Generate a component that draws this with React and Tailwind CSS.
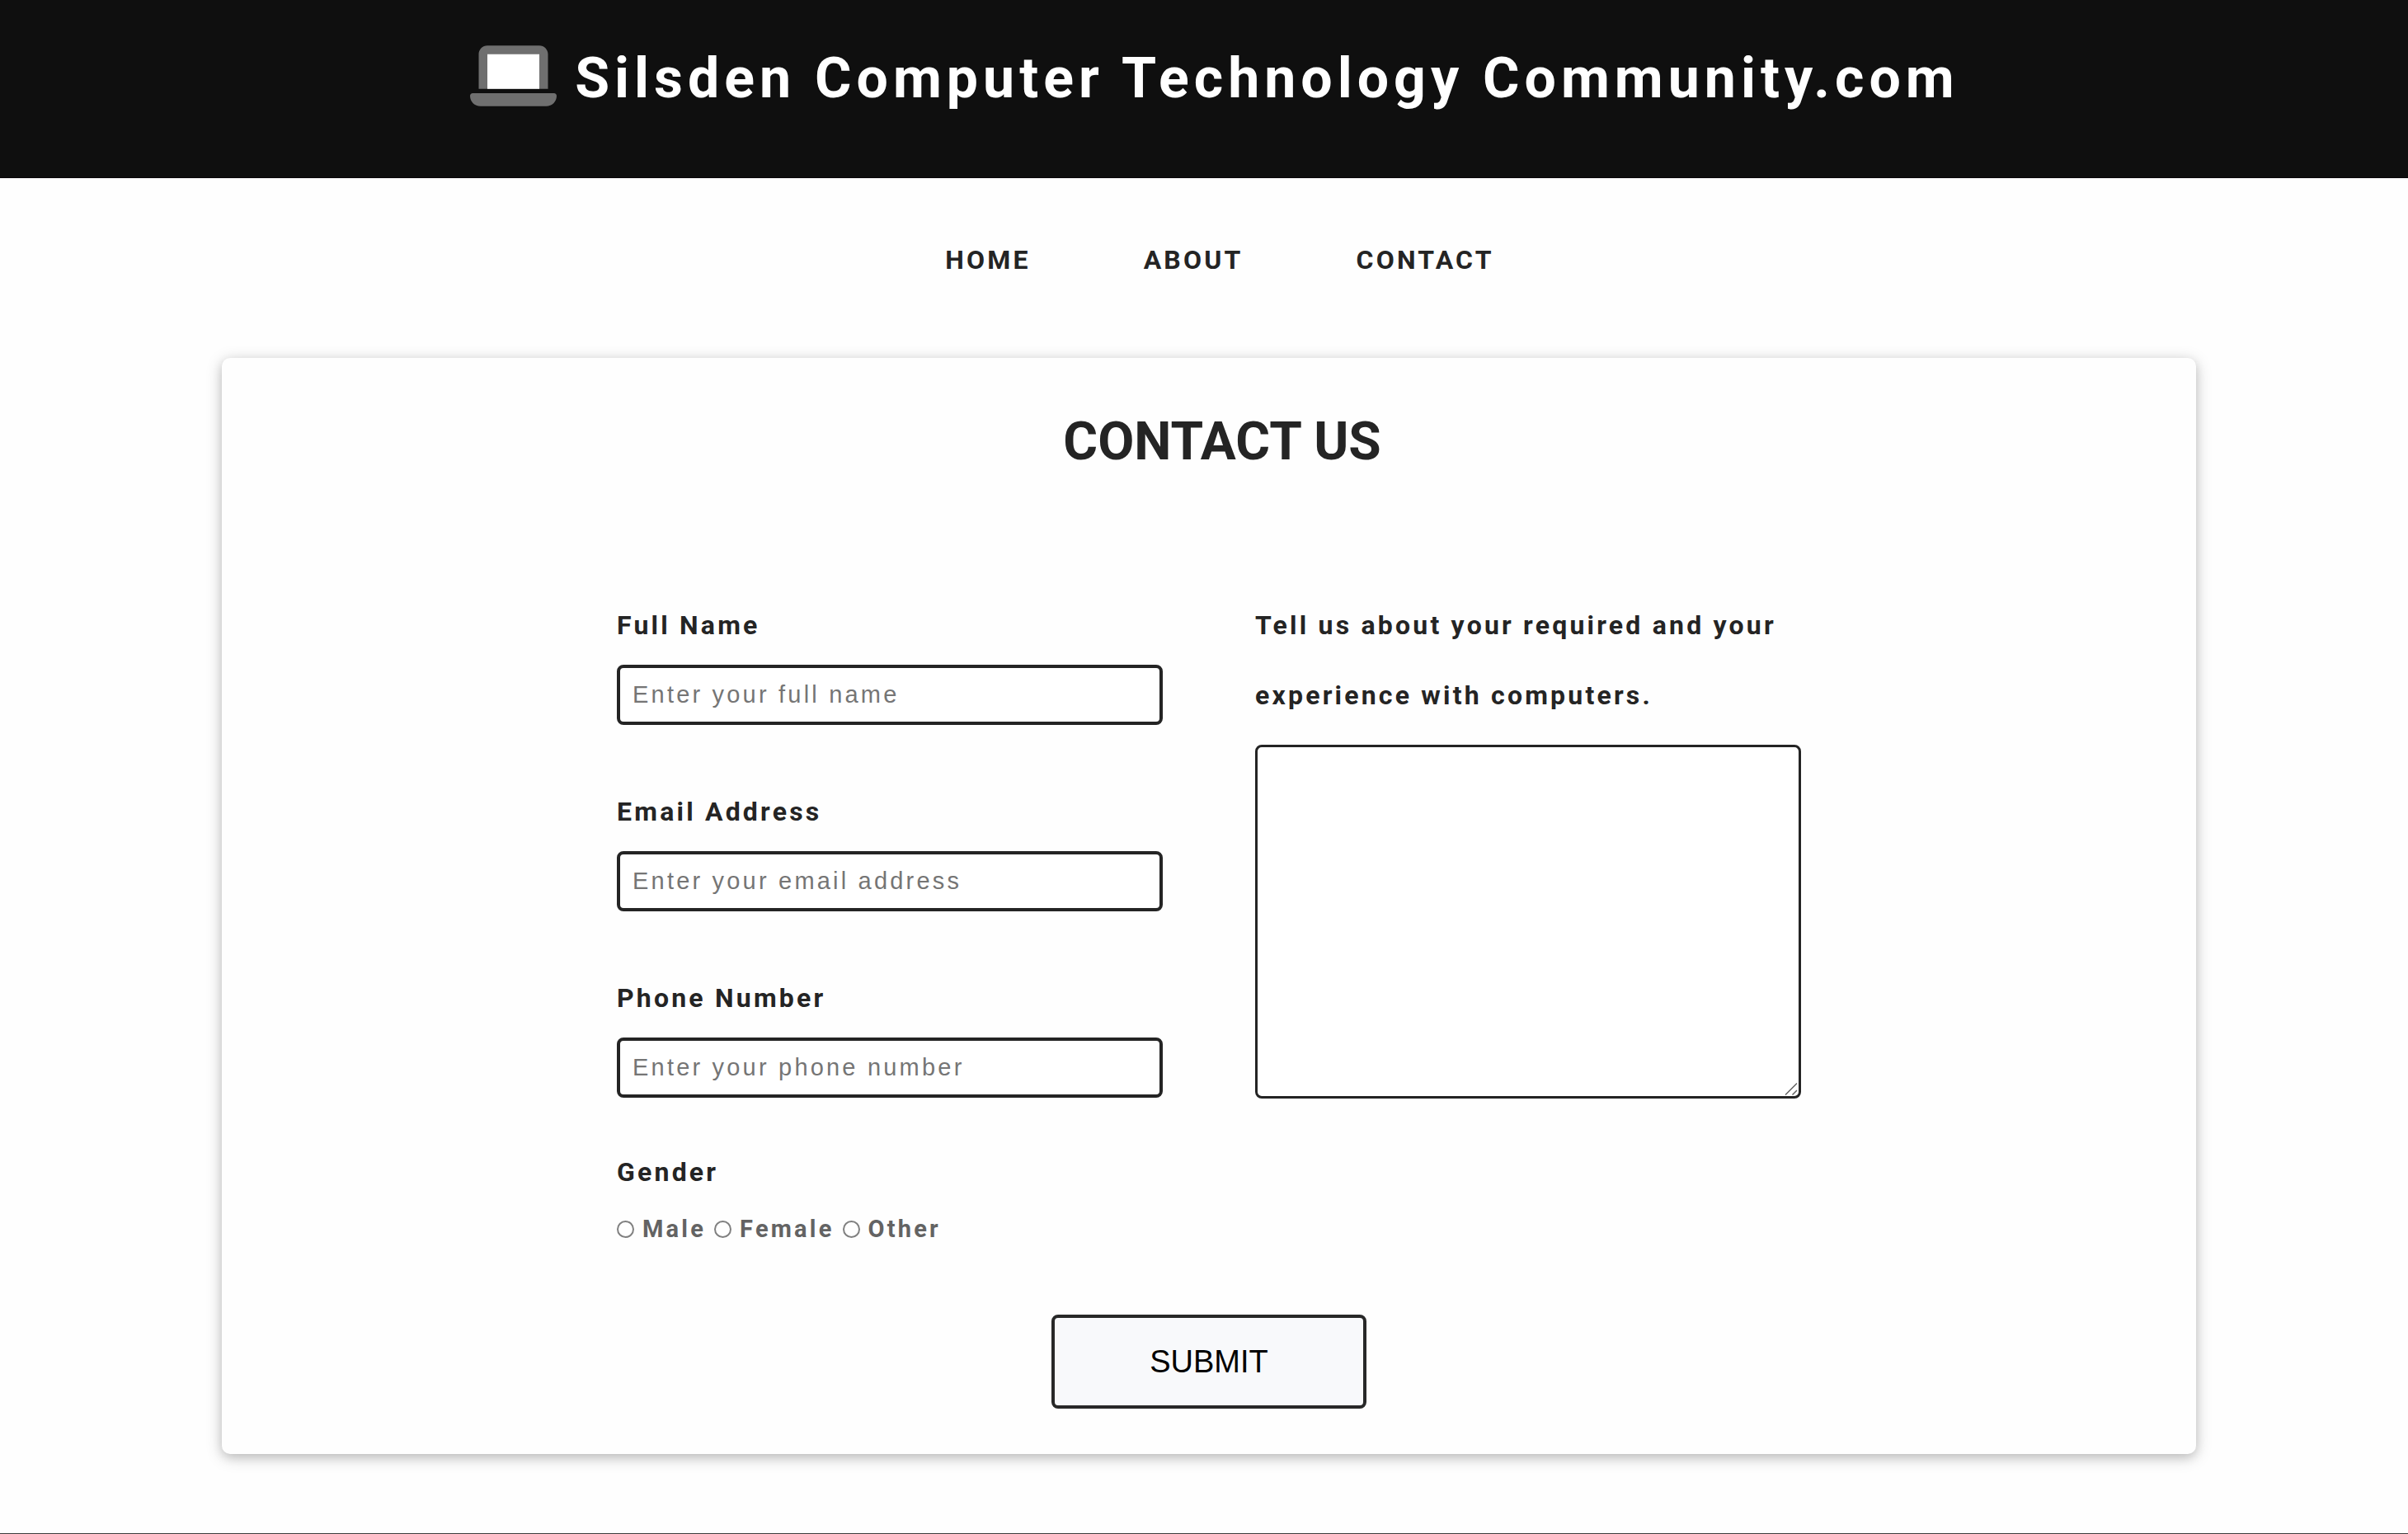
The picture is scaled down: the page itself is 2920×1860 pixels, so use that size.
const NAV_LINKS = ["Home", "About", "Contact"];

const TEXT_FIELDS = [
  { id: "full-name", label: "Full Name", type: "text", placeholder: "Enter your full name" },
  { id: "email", label: "Email Address", type: "email", placeholder: "Enter your email address" },
  { id: "phone", label: "Phone Number", type: "tel", placeholder: "Enter your phone number" },
];

const GENDERS = ["Male", "Female", "Other"];

function LaptopIcon() {
  return (
    <svg viewBox="0 0 640 512" className="h-[84px] w-[105px] shrink-0" aria-hidden="true">
      <path
        fill="#6f6f6f"
        d="M64 96c0-35.3 28.7-64 64-64H512c35.3 0 64 28.7 64 64V352H64V96zM0 403.2C0 392.6 8.6 384 19.2 384H620.8c10.6 0 19.2 8.6 19.2 19.2c0 42.4-34.4 76.8-76.8 76.8H76.8C34.4 480 0 445.6 0 403.2z"
      />
      <path fill="#ffffff" d="M128 96H512V352H128z" />
    </svg>
  );
}

function Header() {
  return (
    <header className="flex items-end justify-center gap-[22px] border-b border-[#0a070a] bg-[#0f0f0f] pt-[50px] pb-[81px] pl-[26px]">
      <LaptopIcon />
      <h1 className="text-[68px] leading-[78px] font-bold tracking-[6px] text-white">
        Silsden Computer Technology Community.com
      </h1>
    </header>
  );
}

function Nav() {
  return (
    <nav className="pt-[75px] pb-[95px] pl-[38px]">
      <ul className="flex justify-center gap-[137px]">
        {NAV_LINKS.map((name) => (
          <li key={name}>
            <a
              href={`#${name.toLowerCase()}`}
              className="block text-[32px] leading-[48px] font-bold tracking-widest text-[#242424] uppercase"
            >
              {name}
            </a>
          </li>
        ))}
      </ul>
    </nav>
  );
}

function TextField({ id, label, type, placeholder }) {
  return (
    <div className="flex flex-col gap-[5px]">
      <label htmlFor={id} className="leading-[85px]">
        {label}
      </label>
      <input
        id={id}
        type={type}
        placeholder={placeholder}
        className="h-[73px] w-full rounded-lg border-4 border-[#242424] bg-white px-[15px] font-['Liberation_Sans',sans-serif] text-[29px] font-normal placeholder:text-[#757575]"
      />
    </div>
  );
}

function GenderField() {
  return (
    <fieldset>
      <legend className="mb-[6px] leading-[85px]">Gender</legend>
      <div className="flex items-center gap-[10px] text-[29px] leading-[40px] text-[#636363]">
        {GENDERS.map((name) => (
          <label key={name} className="flex items-center gap-[10px]">
            <input
              type="radio"
              name="gender"
              value={name}
              className="size-[21px] appearance-none rounded-full border-2 border-[#808080] bg-white checked:border-[6px]"
            />
            {name}
          </label>
        ))}
      </div>
    </fieldset>
  );
}

function MessageField() {
  return (
    <div className="flex flex-col gap-[17px]">
      <label htmlFor="message" className="leading-[85px]">
        Tell us about your required and your experience with computers.
      </label>
      <div className="relative">
        <textarea
          id="message"
          className="block h-[429px] w-full resize-none rounded-lg border-[3px] border-[#242424] bg-white p-3 font-['Liberation_Sans',sans-serif] text-[29px] font-normal"
        />
        <svg
          viewBox="0 0 16 16"
          className="pointer-events-none absolute right-1 bottom-1 size-4"
          fill="none"
          stroke="#636363"
          strokeWidth="1.5"
          aria-hidden="true"
        >
          <path d="M1 15.500L15 1.500M9.500 15.500L15 10" />
        </svg>
      </div>
    </div>
  );
}

export default function App() {
  return (
    <div className="min-h-screen bg-[#fefefe] font-[Roboto,sans-serif] text-[#242424]">
      <Header />
      <Nav />
      <main className="pl-3">
        <section className="mx-auto w-[82.3%] rounded-[10px] bg-[#fefefe] pt-[62px] pb-[55px] shadow-[0_4px_12px_rgba(0,0,0,0.12),0_4px_20px_rgba(0,0,0,0.2)]">
          <h2 className="pl-8 text-center text-[64px] leading-[80px] font-bold uppercase">Contact us</h2>
          <form className="mx-auto mt-[140px] w-3/5 text-[32px] font-bold tracking-widest">
            <div className="grid grid-cols-2 gap-28">
              <div className="flex flex-col gap-12">
                <div className="flex flex-col gap-[63px]">
                  {TEXT_FIELDS.map((field) => (
                    <TextField key={field.id} {...field} />
                  ))}
                </div>
                <GenderField />
              </div>
              <MessageField />
            </div>
            <button
              type="submit"
              className="mx-auto mt-[84px] block h-[114px] w-[382px] rounded-lg border-4 border-[#282828] bg-[#f8f9fb] font-['Liberation_Sans',sans-serif] text-[38px] font-normal tracking-normal text-black"
            >
              SUBMIT
            </button>
          </form>
        </section>
      </main>
      <footer className="mt-24 h-px bg-[#3c3c3c]" />
    </div>
  );
}
